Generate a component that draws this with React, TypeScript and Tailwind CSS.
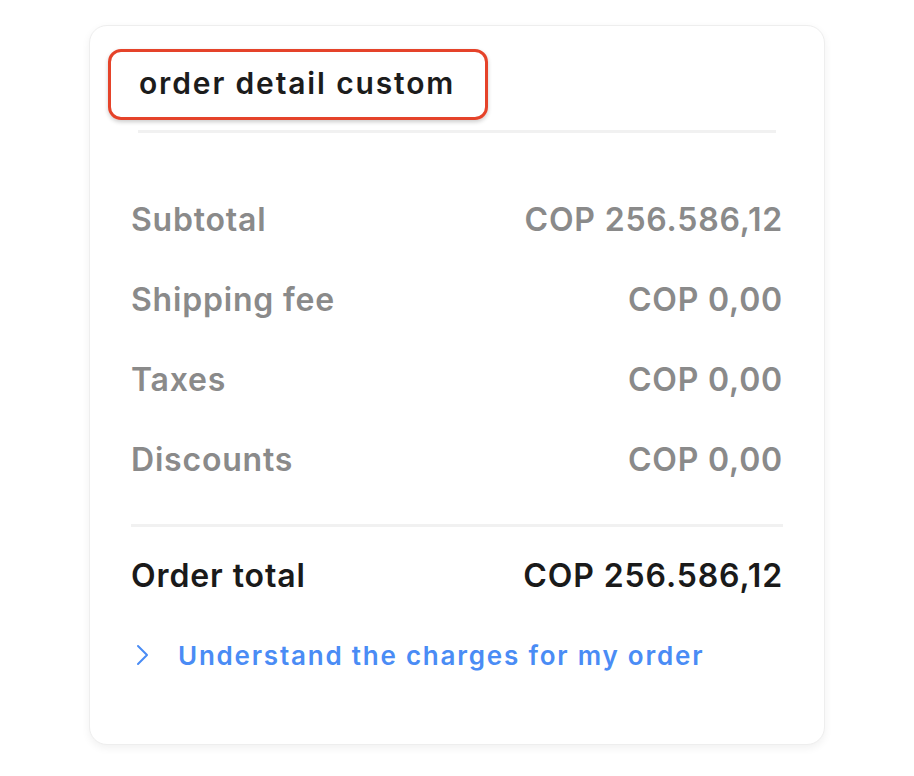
import React from "react";

const rows = [
  { label: "Subtotal", value: "COP 256.586,12" },
  { label: "Shipping fee", value: "COP 0,00" },
  { label: "Taxes", value: "COP 0,00" },
  { label: "Discounts", value: "COP 0,00" },
];

export default function App() {
  return (
    <div className="w-[914px] h-[776px] bg-white pt-[25px] pl-[89px]" style={{ fontFamily: "Inter, 'Noto Sans', sans-serif" }}>
      <div className="w-[736px] h-[720px] rounded-[18px] border border-[#eeeeee] bg-white shadow-[0_3px_8px_rgba(0,0,0,0.06)] flex flex-col">
        <div className="pl-[18px] pt-[23px]">
          <div className="w-[380px] h-[71px] rounded-[13px] border-[3px] border-[#e5432a] shadow-[0_2px_4px_rgba(0,0,0,0.2)] flex items-center pl-[28px] pb-[3px]">
            <span className="text-[30px] font-semibold text-[#1c1c1c] tracking-[1.85px]">order detail custom</span>
          </div>
        </div>
        <div className="mx-[48px] mt-[10px] h-[3px] bg-[#f1f1f1]" />
        <div className="px-[41px] mt-[47px] flex flex-col">
          {rows.map((r) => (
            <div key={r.label} className="h-[80px] flex items-center justify-between text-[32px] tracking-[0.8px] font-semibold text-[#8a8a8a]">
              <span>{r.label}</span>
              <span>{r.value}</span>
            </div>
          ))}
          <div className="mt-[24px] h-[3px] bg-[#f1f1f1]" />
          <div className="mt-[24px] h-[50px] flex items-center justify-between text-[32px] tracking-[0.9px] font-semibold text-[#1a1a1a]">
            <span>Order total</span>
            <span>COP 256.586,12</span>
          </div>
          <div className="mt-[29px] h-[50px] flex items-center text-[#4a8cf5]">
            <svg width="16" height="24" viewBox="0 0 16 24" className="ml-[4px]" fill="none" stroke="#4a8cf5" strokeWidth="2" strokeLinecap="round" strokeLinejoin="round">
              <path d="M3 3 L12 12 L3 21" />
            </svg>
            <span className="ml-[27px] text-[26px] tracking-[1.78px] font-semibold">Understand the charges for my order</span>
          </div>
        </div>
      </div>
    </div>
  );
}
